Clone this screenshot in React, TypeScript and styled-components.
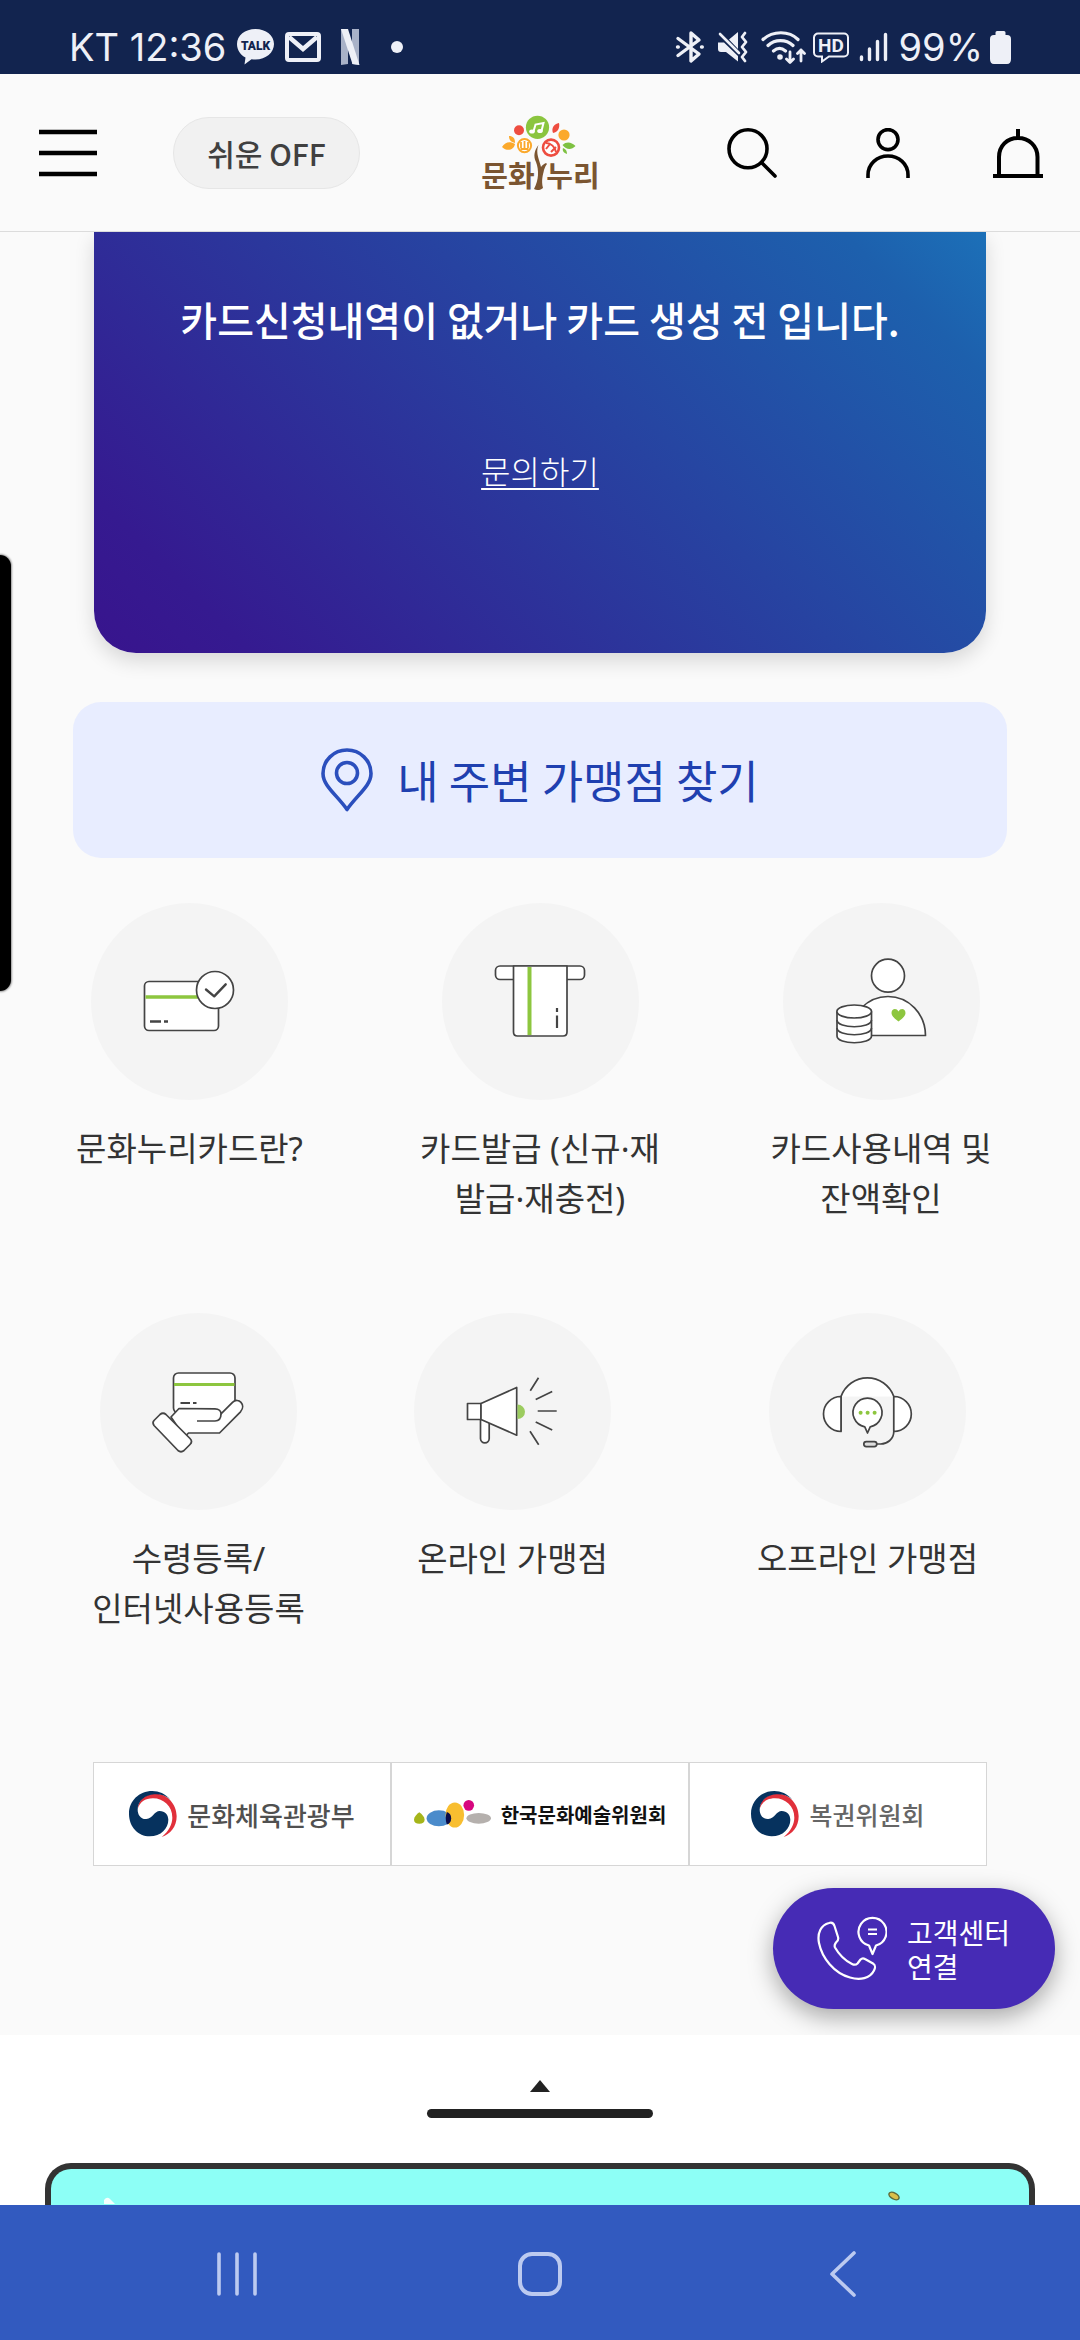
import React from "react";
import styled, { createGlobalStyle } from "styled-components";

const GlobalStyle = createGlobalStyle`
  *, *::before, *::after { box-sizing: border-box; }
  body {
    margin: 0;
    background: #fafafa;
    font-family: "Noto Sans CJK KR", "Noto Sans", sans-serif;
    color: #333;
  }
  button { font: inherit; color: inherit; background: none; border: 0; padding: 0; cursor: pointer; }
  a { color: inherit; text-decoration: none; }
  svg { display: block; flex: none; }
`;

const Screen = styled.div`
  position: relative;
  display: flex;
  flex-direction: column;
  min-height: 100vh;
  overflow: hidden;
`;

/* ---------- system status bar ---------- */

const StatusBar = styled.div`
  display: flex;
  justify-content: space-between;
  padding: 20px 69px 0;
  height: 74px;
  background: #12244f;
  color: #eef0f7;
  font-family: Inter, Roboto, sans-serif;
  font-size: 38px;
  line-height: 54px;
`;

const StatusGroup = styled.div<{ $gap: number }>`
  display: flex;
  align-items: center;
  gap: ${(p) => p.$gap}px;
`;

/* ---------- app header ---------- */

const Header = styled.header`
  display: grid;
  grid-template-columns: 1fr auto 1fr;
  align-items: center;
  height: 158px;
  padding: 0 37px 0 39px;
  background: #fafafa;
  border-bottom: 1px solid #dcdcdc;
`;

const HeaderStart = styled.div`
  display: flex;
  align-items: center;
  gap: 76px;
`;

const HeaderEnd = styled.div`
  display: flex;
  align-items: center;
  justify-content: flex-end;
  gap: 83px;
`;

const IconButton = styled.button`
  display: flex;
  align-items: center;
  justify-content: center;
`;

const EasyToggle = styled.button`
  height: 72px;
  width: 187px;
  border: 1px solid #e6e6e6;
  border-radius: 36px;
  background: #f1f1f1;
  color: #404040;
  font-size: 30px;
  font-weight: 500;
  line-height: 44px;
  white-space: nowrap;
`;

/* ---------- main ---------- */

const Main = styled.main`
  position: relative;
  overflow: hidden;
  padding-bottom: 169px;
`;

const CardPanel = styled.section`
  display: flex;
  flex-direction: column;
  align-items: center;
  margin: 0 94px;
  padding: 57px 24px 159px;
  border-radius: 0 0 42px 42px;
  background: linear-gradient(45deg, #38148d 0%, #351a90 12%, #1d60ad 89%, #1c70b8 100%);
  box-shadow: 0 8px 20px rgba(0, 0, 0, 0.14);
  color: #fff;
`;

const CardMessage = styled.p`
  margin: 0 0 97px;
  font-size: 40px;
  font-weight: 500;
  line-height: 60px;
  text-align: center;
`;

const InquiryLink = styled.a`
  font-size: 32px;
  font-weight: 300;
  line-height: 48px;
  text-decoration: underline;
  text-decoration-thickness: 2px;
  text-underline-offset: 4px;
`;

const NearbyButton = styled.button`
  display: flex;
  align-items: center;
  justify-content: center;
  gap: 24px;
  width: calc(100% - 146px);
  height: 156px;
  margin: 49px 73px 45px;
  border-radius: 28px;
  background: #e8edff;
  color: #1f40b0;
  font-size: 45px;
  line-height: 64px;
`;

const Services = styled.nav`
  display: grid;
  row-gap: 89px;
`;

const ServiceRow = styled.div<{ $columns: string; $inset: string }>`
  display: grid;
  grid-template-columns: ${(p) => p.$columns};
  padding: ${(p) => p.$inset};
`;

const Service = styled.a`
  display: flex;
  flex-direction: column;
  align-items: center;
  gap: 24px;
`;

const ServiceCircle = styled.span`
  display: block;
  width: 197px;
  height: 197px;
  border-radius: 50%;
  background: #f4f4f4;
`;

const ServiceLabel = styled.span`
  min-height: 100px;
  font-family: "Noto Sans", "Noto Sans CJK KR", sans-serif;
  font-size: 33px;
  line-height: 50px;
  text-align: center;
  white-space: pre;
`;

const Partners = styled.div`
  display: grid;
  grid-template-columns: repeat(3, 1fr);
  margin: 128px 93px 0;
`;

const Partner = styled.a<{ $size: number; $weight: number; $color: string }>`
  display: flex;
  align-items: center;
  justify-content: center;
  gap: 10px;
  height: 104px;
  border: 1px solid #d6d6d6;
  background: #fff;
  color: ${(p) => p.$color};
  font-size: ${(p) => p.$size}px;
  font-weight: ${(p) => p.$weight};
  white-space: nowrap;
`;

const CallCenter = styled.button`
  position: absolute;
  right: 25px;
  bottom: 26px;
  display: flex;
  align-items: center;
  gap: 20px;
  height: 121px;
  padding: 0 45px 0 44px;
  border-radius: 61px;
  background: #462bb5;
  box-shadow: 0 8px 24px rgba(0, 0, 0, 0.34);
  color: #fff;
  font-size: 28px;
  line-height: 34px;
  text-align: left;
  white-space: pre;
`;

const EdgeHandle = styled.div`
  position: absolute;
  left: 0;
  top: 555px;
  width: 11px;
  height: 436px;
  border-radius: 0 11px 11px 0;
  background: #000;
  box-shadow: 0 0 2px 1px rgba(0, 0, 0, 0.4);
`;

/* ---------- bottom sheet and navigation ---------- */

const Sheet = styled.section`
  display: flex;
  flex: 1;
  flex-direction: column;
  align-items: center;
  padding: 45px 45px 0;
  background: #fff;
`;

const SheetHandle = styled.button`
  display: flex;
  flex-direction: column;
  align-items: center;
  gap: 17px;
`;

const HandleBar = styled.span`
  width: 226px;
  height: 9px;
  border-radius: 5px;
  background: #222;
`;

const Banner = styled.div`
  display: flex;
  justify-content: space-between;
  flex: 1;
  align-self: stretch;
  min-height: 41px;
  margin-top: 45px;
  padding: 21px 128px 0 52px;
  border: 6px solid #333;
  border-bottom: 0;
  border-radius: 26px 26px 0 0;
  background: #8dfff6;
`;

const NavBar = styled.nav`
  display: grid;
  grid-template-columns: repeat(3, 1fr);
  height: 135px;
  padding: 3px 85px 0;
  background: #325abf;
`;

/* ---------- drawings ---------- */

const StatusIcons = {
  talk: (
    <svg width="37" height="36" viewBox="0 0 37 36">
      <path d="M18.500 0C29 0 37 6.500 37 15s-8 15.500-18.500 15.500c-1.300 0-2.600 0-4-.3L7.500 35.500l1-7C3.500 26 0 21 0 15 0 6.500 8 0 18.500 0z" fill="#eef0f7" />
      <text x="18.500" y="20.500" textAnchor="middle" fontFamily="Roboto, sans-serif" fontSize="12" fontWeight="900" fill="#12244f">TALK</text>
    </svg>
  ),
  mail: (
    <svg width="36" height="30" viewBox="0 0 36 30">
      <rect x="2" y="2" width="32" height="26" rx="2" fill="none" stroke="#eef0f7" strokeWidth="4" />
      <path d="M4 5l14 12L32 5" fill="none" stroke="#eef0f7" strokeWidth="4.500" />
    </svg>
  ),
  netflix: (
    <svg width="36" height="36" viewBox="0 0 36 36">
      <path d="M9 0h7v35l-7 1zM20 0h7v36l-7-1z" fill="#a9b2c8" />
      <path d="M9 0h7l11.500 36-7-1z" fill="#eef0f7" />
    </svg>
  ),
  dot: (
    <svg width="36" height="36" viewBox="0 0 36 36"><circle cx="18" cy="18" r="6" fill="#eef0f7" /></svg>
  ),
  bluetooth: (
    <svg width="35" height="34" viewBox="0 0 35 34" fill="none" stroke="#eef0f7" strokeWidth="3.400" strokeLinecap="round" strokeLinejoin="round">
      <path d="M6 8.500l21 15.500-8 7V3l8 7L6 25.500" />
      <path d="M5.500 17h.8M29.500 17h.8" />
    </svg>
  ),
  mute: (
    <svg width="38" height="34" viewBox="0 0 38 34">
      <path d="M24 2v17L15 9.500zM4 12.500h6L24 26v5.500L12 22H7c-2 0-3-1-3-3z" fill="#eef0f7" />
      <path d="M6 4l19 19" stroke="#eef0f7" strokeWidth="2.600" strokeLinecap="round" />
      <path d="M31 3l-3 4 4 5-4 5 4 5-4 5 3 4" fill="none" stroke="#eef0f7" strokeWidth="2.800" strokeLinecap="round" strokeLinejoin="round" />
    </svg>
  ),
  wifi: (
    <svg width="47" height="35" viewBox="0 0 47 35" fill="none" stroke="#eef0f7" strokeWidth="3.200" strokeLinecap="round" strokeLinejoin="round">
      <path d="M4 9.500C14 .5 30 .5 39 9.500M9 15.500c7-6.500 18-6.500 25 0M14.500 21c4-3.500 8-3.500 12 0" />
      <circle cx="21" cy="27" r="1.200" fill="#eef0f7" />
      <path d="M31 22v10M27.500 29l3.500 3.500 3.500-3.500M42 31V20M38.500 23.500L42 20l3.500 3.500" strokeWidth="2.800" />
    </svg>
  ),
  hd: (
    <svg width="37" height="31" viewBox="0 0 37 31">
      <path d="M5 1.500h26a4 4 0 0 1 4 4v15a4 4 0 0 1-4 4H16L9 29.500v-5H5a4 4 0 0 1-4-4v-15a4 4 0 0 1 4-4z" fill="none" stroke="#eef0f7" strokeWidth="2" />
      <text x="18" y="19.500" textAnchor="middle" fontFamily="Roboto, sans-serif" fontSize="19" fontWeight="700" fill="#eef0f7">HD</text>
    </svg>
  ),
  signal: (
    <svg width="35" height="30" viewBox="0 0 35 30" stroke="#eef0f7" strokeWidth="3.400" strokeLinecap="round">
      <path d="M4.500 25v2.500M12.500 17v10.500M20.500 9.500v18M28.500 2.500v25" />
    </svg>
  ),
  battery: (
    <svg width="21" height="33" viewBox="0 0 21 33">
      <path d="M7 0h7q1.500 0 1.500 1.500V4H17q4 0 4 4v20q0 5-4 5H4q-4 0-4-5V8q0-4 4-4h1.500V1.500Q5.500 0 7 0z" fill="#eef0f7" />
    </svg>
  ),
};

const MenuIcon = () => (
  <svg width="58" height="48" viewBox="0 0 58 48" stroke="#000" strokeWidth="4.500">
    <path d="M0 3h58M0 24h58M0 45h58" />
  </svg>
);

const SearchIcon = () => (
  <svg width="50" height="50" viewBox="0 0 50 50" fill="none" stroke="#000" strokeWidth="3.600" strokeLinecap="round">
    <circle cx="21" cy="20.800" r="19" />
    <path d="M34.500 34.500L48 48" />
  </svg>
);

const UserIcon = () => (
  <svg width="50" height="50" viewBox="0 0 50 50" fill="none" stroke="#000" strokeWidth="3.600">
    <circle cx="28" cy="11.600" r="10" />
    <path d="M8 50v-3c0-11 9-19 20-19s20 8 20 19v3" />
  </svg>
);

const BellIcon = () => (
  <svg width="50" height="50" viewBox="0 0 50 50" fill="none" stroke="#000" strokeWidth="4">
    <path d="M25 1v9M6 47V29C6 18 14 10 25 10s19.500 8 19.500 19v18" />
    <path d="M0 48h50" />
  </svg>
);

const BrandLogo = () => (
  <svg width="140" height="95" viewBox="0 0 140 95" role="img" aria-label="문화누리">
    <circle cx="66.500" cy="22.300" r="11.600" fill="#8bc53f" />
    <path d="M62.500 26.500l2-7 8-1.500-2 8" fill="none" stroke="#fff" strokeWidth="2" />
    <ellipse cx="61" cy="26.500" rx="2.800" ry="2" fill="#fff" />
    <ellipse cx="69" cy="26" rx="2.800" ry="2" fill="#fff" />
    <circle cx="48" cy="25.300" r="5" fill="#ee4d40" />
    <path d="M88 18c-5 1-8 5-6 10 5-1 7-5 6-10z" fill="#ee4d40" />
    <circle cx="93" cy="30" r="5.600" fill="#fba92c" />
    <circle cx="53.500" cy="40.600" r="6.600" fill="#fff" stroke="#fba92c" strokeWidth="2" />
    <path d="M50 37v6M53.500 36v7M57 37v6M49.500 44h8" stroke="#fba92c" strokeWidth="1.800" />
    <circle cx="80" cy="42.600" r="8" fill="#fff" stroke="#ee4d40" strokeWidth="2.600" />
    <path d="M75 38c5 0 9 4 10 9M75 44l4-5M80 47l5-5" fill="none" stroke="#ee4d40" strokeWidth="2" />
    <path d="M31 42c3-5 8-6 13-3-1 6-8 8-13 3zM38 31c4 0 6 2 6 7-4-1-6-3-6-7z" fill="#fba92c" />
    <path d="M91.500 40c4-4 9-3 13 1-4 4-9 4-13-1zM92 43c3 1 4 3 4 6-3-1-5-3-4-6z" fill="#7ec142" />
    <path d="M67.500 40c-4 5-5.500 11-2.500 17 3 8 3 18-2 27 3 2 7 1 9-1-2-8 0-13 1-18 1-3 2-5 3-6l-1-1c-2 1-4 2-5 4-1-6-6-14-2.500-22z" fill="#7b5531" />
    <g fontFamily="'Noto Sans CJK KR', sans-serif" fontSize="29" fontWeight="700" fill="#7b5531" textAnchor="middle">
      <text x="37" y="82">문화</text>
      <text x="102" y="82">누리</text>
    </g>
  </svg>
);

const PinIcon = () => (
  <svg width="52" height="64" viewBox="0 0 52 64" fill="none" stroke="#2b4fbd" strokeWidth="3.600" strokeLinejoin="round">
    <path d="M26 61.500C16 47 2 38 2 25.500a24 23.500 0 0 1 48 0C50 38 36 47 26 61.500z" />
    <circle cx="26" cy="25" r="10.500" />
  </svg>
);

const Line: React.FC<{ children: React.ReactNode }> = ({ children }) => (
  <svg width="197" height="197" viewBox="0 0 197 197" fill="#fff" stroke="#444" strokeWidth="1.700" strokeLinejoin="round">
    {children}
  </svg>
);

const CardCheckIcon = () => (
  <Line>
    <rect x="53.500" y="78.500" width="74" height="49" rx="4.500" />
    <path d="M54.500 94H126" stroke="#8dc63f" strokeWidth="3.400" />
    <path d="M59 118.500h11M73 118.500h4" strokeWidth="2.400" />
    <circle cx="124" cy="87" r="18.500" />
    <path d="M115 86.500l8.200 6.800 11.500-12" fill="none" strokeWidth="2.400" strokeLinecap="round" />
  </Line>
);

const CardIssueIcon = () => (
  <Line>
    <rect x="53.500" y="63" width="89" height="13.500" rx="4.500" />
    <path d="M71.500 63v66q0 4 4 4H121q4 0 4-4V63z" />
    <path d="M87.500 64v68" stroke="#8dc63f" strokeWidth="4" />
    <path d="M115 105v4M115 112.500V125" strokeWidth="2.200" />
  </Line>
);

const PersonCoinsIcon = () => (
  <Line>
    <circle cx="105" cy="72.700" r="16.500" />
    <path d="M67.500 132.500a37.500 39 0 0 1 75 0z" />
    <path d="M115.500 118.500c-4-3-7-5.500-7-8.500 0-4.500 5-5.500 7-1.500 2-4 7-3 7 1.500 0 3-3 5.500-7 8.500z" fill="#8dc63f" stroke="none" />
    <path d="M54 108.500V133c0 9 34.500 9 34.500 0v-24.500" />
    <path d="M54 117c0 9 34.500 9 34.500 0M54 125c0 9 34.500 9 34.500 0" fill="none" />
    <ellipse cx="71.200" cy="108.500" rx="17.300" ry="6.500" />
  </Line>
);

const HandCardIcon = () => (
  <Line>
    <rect x="73.500" y="60" width="61.500" height="40" rx="5" />
    <path d="M74 71.500h60.500" stroke="#8dc63f" strokeWidth="2.800" />
    <path d="M80.500 90H90M93 90h3.500" strokeWidth="2" />
    <path d="M71 104l8-8.500 36 .3c4 0 6 2.500 6 5l11.500-11.500c6-5.500 14 2.500 8 9.500L119.500 120H88.500l-4 4z" />
    <path d="M121 101c0 4-2 7-6 7H97" fill="none" />
    <path d="M60 101.500q3-2.500 6 0l24 24q3 3 0 6l-6 6q-3 2.500-6 0l-24-25q-2-3 0-5z" />
  </Line>
);

const MegaphoneIcon = () => (
  <Line>
    <path d="M66.500 100v25.500a4.300 4.300 0 0 0 8.700 0V104" />
    <path d="M53.500 90.500H67v16H53.500z" />
    <path d="M67 90.500l35.700-16v47.700L67 106.500z" />
    <path d="M103.500 91.500a7.500 7.300 0 0 1 0 14.600z" fill="#9ccc5f" stroke="none" />
    <path d="M116.300 77.700l8.200-13M121.700 86.500l16.500-8M123.700 98h19M121.700 109l16.500 8M116 118.300l8.700 13.400" fill="none" />
  </Line>
);

const HeadsetIcon = () => (
  <Line>
    <path d="M72 83.500a28 28 0 0 1 52.800 0z" stroke="none" />
    <path d="M72 118.500V83.500a28 28 0 0 1 52.800 0v35c0 8-7 12.500-13 12.500h-4" fill="none" />
    <path d="M72 83.500v35a17.500 17.500 0 0 1 0-35zM124.800 83.500a17.500 17.500 0 0 1 0 35z" />
    <path d="M98.500 120l-2.700-6.200a14.500 14.500 0 1 1 5.400 0z" />
    <g fill="#8dc63f" stroke="none">
      <circle cx="91.600" cy="99.700" r="2" /><circle cx="98.600" cy="99.700" r="2" /><circle cx="105.600" cy="99.700" r="2" />
    </g>
    <rect x="94.800" y="128.600" width="13" height="5" rx="2.500" fill="#ddd" />
  </Line>
);

const Emblem = () => (
  <svg width="48" height="46" viewBox="0 0 144 138">
    <path d="M26 54C27 28 48 8 80 8c35 0 63 32 63 68 0 32-19 54-45 62 22-18 32-40 32-58 0-34-26-58-58-58-24 0-40 12-46 32z" fill="#e1303b" />
    <path d="M124 26C108 8 90 0 70 0 30 0 0 30 0 68c0 40 28 68 62 68s56-24 56-50c0-14-10-26-26-26S72 82 52 84c-18 1-26-14-26-28 0-26 22-44 50-46 18-1 36 4 48 16z" fill="#06325e" />
  </svg>
);

const ArtsCouncilMark = () => (
  <svg width="77" height="28" viewBox="0 0 232 84">
    <path d="M16 37c8 6 16 14 16 22s-6 12-16 12S0 67 0 59s8-16 16-22z" fill="#a5b51a" />
    <ellipse cx="75" cy="55" rx="37" ry="24" fill="#4a8bcb" />
    <ellipse cx="123" cy="45" rx="28" ry="38" fill="#f8be30" />
    <path d="M99 36q13 4 13 19t-13 19q-7-19 0-38z" fill="#0a0c48" />
    <circle cx="165" cy="16" r="16" fill="#d7077f" />
    <ellipse cx="195" cy="55" rx="37" ry="16" fill="#b5b0ad" />
  </svg>
);

const CallIcon = () => (
  <svg width="70" height="66" viewBox="0 0 70 66" fill="none" stroke="#fff" strokeWidth="2.200" strokeLinejoin="round" strokeLinecap="round">
    <path d="M12 7c3-1 4.500 0 5.500 3l3.500 11c1 3-.5 4-2 5.500-1.500 2-2 3-1 5 4 7 10 13 17 16.500 2 1 4 1 5.500-.5l3-4c1.500-1.500 3-1.500 4.500-.5l8 4.500c3 2 2.500 4 1 7-4 8-14 10-24 7C17 57 5 42 2 27 0 17 4 9 12 7z" />
    <path d="M55.500 38l-3.500-8.500a14 14 0 1 1 7 0z" />
    <path d="M51 13.500h9M51 18h9" strokeLinecap="butt" />
  </svg>
);

type ServiceItem = { label: string; icon: React.ReactNode };

const serviceRows: { columns: string; inset: string; items: ServiceItem[] }[] = [
  {
    columns: "341fr 360fr 322fr",
    inset: "0 38px 0 19px",
    items: [
      { label: "문화누리카드란?", icon: <CardCheckIcon /> },
      { label: "카드발급 (신규·재\n발급·재충전)", icon: <CardIssueIcon /> },
      { label: "카드사용내역 및\n잔액확인", icon: <PersonCoinsIcon /> },
    ],
  },
  {
    columns: "313fr 315fr 395fr",
    inset: "0 15px 0 42px",
    items: [
      { label: "수령등록/\n인터넷사용등록", icon: <HandCardIcon /> },
      { label: "온라인 가맹점", icon: <MegaphoneIcon /> },
      { label: "오프라인 가맹점", icon: <HeadsetIcon /> },
    ],
  },
];

export default function App() {
  return (
    <Screen>
      <GlobalStyle />
      <StatusBar>
        <StatusGroup $gap={11}>
          <span>KT 12:36</span>
          {StatusIcons.talk}
          {StatusIcons.mail}
          {StatusIcons.netflix}
          {StatusIcons.dot}
        </StatusGroup>
        <StatusGroup $gap={7}>
          {StatusIcons.bluetooth}
          {StatusIcons.mute}
          {StatusIcons.wifi}
          {StatusIcons.hd}
          {StatusIcons.signal}
          <span>99%</span>
          {StatusIcons.battery}
        </StatusGroup>
      </StatusBar>

      <Header>
        <HeaderStart>
          <IconButton aria-label="메뉴"><MenuIcon /></IconButton>
          <EasyToggle>쉬운 OFF</EasyToggle>
        </HeaderStart>
        <BrandLogo />
        <HeaderEnd>
          <IconButton aria-label="검색"><SearchIcon /></IconButton>
          <IconButton aria-label="내 정보"><UserIcon /></IconButton>
          <IconButton aria-label="알림"><BellIcon /></IconButton>
        </HeaderEnd>
      </Header>

      <Main>
        <CardPanel>
          <CardMessage>카드신청내역이 없거나 카드 생성 전 입니다.</CardMessage>
          <InquiryLink href="#inquiry">문의하기</InquiryLink>
        </CardPanel>

        <NearbyButton>
          <PinIcon />
          내 주변 가맹점 찾기
        </NearbyButton>

        <Services>
          {serviceRows.map((row) => (
            <ServiceRow key={row.columns} $columns={row.columns} $inset={row.inset}>
              {row.items.map((item) => (
                <Service key={item.label} href="#service">
                  <ServiceCircle>{item.icon}</ServiceCircle>
                  <ServiceLabel>{item.label}</ServiceLabel>
                </Service>
              ))}
            </ServiceRow>
          ))}
        </Services>

        <Partners>
          <Partner href="#mcst" $size={26} $weight={500} $color="#505050"><Emblem />문화체육관광부</Partner>
          <Partner href="#arko" $size={20} $weight={700} $color="#111"><ArtsCouncilMark />한국문화예술위원회</Partner>
          <Partner href="#lottery" $size={25} $weight={500} $color="#666"><Emblem />복권위원회</Partner>
        </Partners>

        <CallCenter>
          <CallIcon />
          <span>{"고객센터\n연결"}</span>
        </CallCenter>
      </Main>

      <Sheet>
        <SheetHandle aria-label="펼치기">
          <svg width="20" height="12" viewBox="0 0 20 12"><path d="M10 0l10 12H0z" fill="#222" /></svg>
          <HandleBar />
        </SheetHandle>
        <Banner>
          <svg width="14" height="14" viewBox="0 0 14 14"><path d="M1 14V10Q4 6 7 9l5 5z" fill="#f4fffd" /></svg>
          <svg width="14" height="14" viewBox="0 0 14 14">
            <ellipse cx="7" cy="6" rx="5.500" ry="3" transform="rotate(28 7 6)" fill="#d9c04a" stroke="#5f6a3a" strokeWidth="1.500" />
          </svg>
        </Banner>
      </Sheet>

      <NavBar>
        <IconButton aria-label="최근 앱">
          <svg width="44" height="46" viewBox="0 0 44 46" stroke="#bccaf0" strokeWidth="3.600" strokeLinecap="round"><path d="M4 3v40M22 3v40M40 3v40" /></svg>
        </IconButton>
        <IconButton aria-label="홈">
          <svg width="48" height="48" viewBox="0 0 48 48" fill="none" stroke="#bccaf0" strokeWidth="4"><rect x="4" y="4" width="40" height="40" rx="12" /></svg>
        </IconButton>
        <IconButton aria-label="뒤로">
          <svg width="28" height="48" viewBox="0 0 28 48" fill="none" stroke="#bccaf0" strokeWidth="3.600" strokeLinecap="round" strokeLinejoin="round"><path d="M25 3L3 24l22 21" /></svg>
        </IconButton>
      </NavBar>
      <EdgeHandle />
    </Screen>
  );
}
